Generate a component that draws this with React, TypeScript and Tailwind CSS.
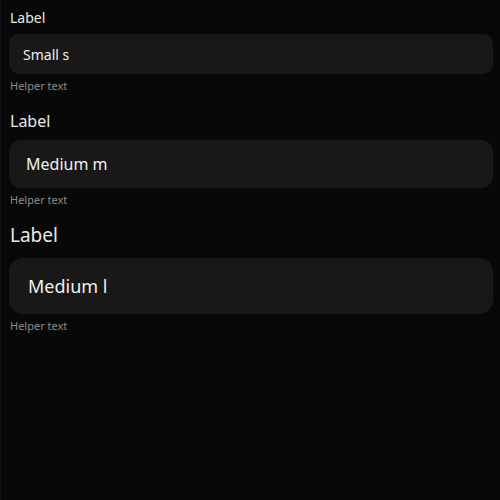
import React from "react";

type Size = "s" | "m" | "l";

const sizes: Record<Size, { label: string; input: string; gap: string; text: string; wrap: string }> = {
  s: {
    label: "text-[14px] leading-[20px]",
    input: "h-[40px] rounded-[10px] px-[14px]",
    gap: "mt-[6px]",
    text: "text-[14px]",
    wrap: "",
  },
  m: {
    label: "text-[16px] leading-[22px]",
    input: "h-[48px] rounded-[12px] px-[17px]",
    gap: "mt-[8px]",
    text: "text-[16px]",
    wrap: "mt-[16px]",
  },
  l: {
    label: "text-[19px] leading-[26px]",
    input: "h-[56px] rounded-[14px] px-[19px]",
    gap: "mt-[10px]",
    text: "text-[18px]",
    wrap: "mt-[14px]",
  },
};

const Field: React.FC<{ size: Size; value: string }> = ({ size, value }) => {
  const s = sizes[size];
  return (
    <div className={`flex flex-col ${s.wrap}`}>
      <label className={`${s.label} text-[#e8e8e8] pl-[1px]`}>Label</label>
      <div className={`${s.gap} ${s.input} flex items-center bg-[#181818]`}>
        <span className={`${s.text} text-[#f0f0f0]`}>{value}</span>
      </div>
      <span className="mt-[4px] pl-[1px] text-[11px] leading-[16px] text-[#8c8c8c]">Helper text</span>
    </div>
  );
};

export default function App() {
  return (
    <div
      className="w-[500px] h-[500px] bg-[#080808] border-l border-[#111111] pl-[8px] pr-[7px] pt-[8px] flex flex-col"
      style={{ fontFamily: '"Noto Sans", "Open Sans", sans-serif' }}
    >
      <Field size="s" value="Small s" />
      <Field size="m" value="Medium m" />
      <Field size="l" value="Medium l" />
    </div>
  );
}
